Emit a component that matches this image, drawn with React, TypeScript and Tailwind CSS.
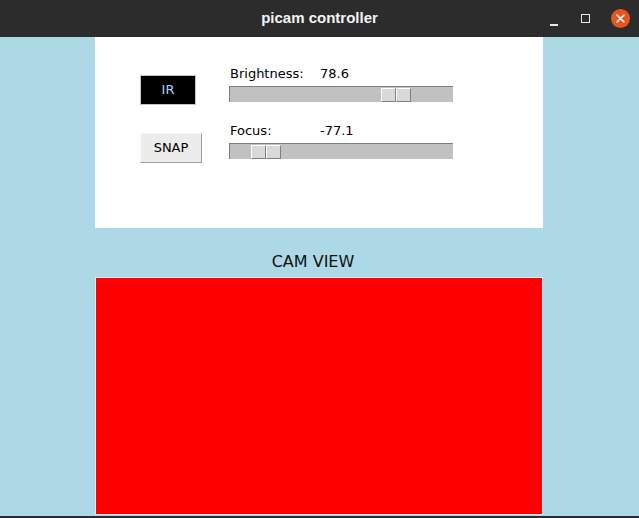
const SLIDERS = [
  { label: "Brightness:", value: "78.6", handle: "ml-[151px]" },
  { label: "Focus:", value: "-77.1", handle: "ml-[21px]" },
];

function Slider({ label, value, handle }: { label: string; value: string; handle: string }) {
  return (
    <div className="flex flex-col">
      <div className="flex h-[16px] items-center pl-[1px] text-[13px] leading-[16px] text-black">
        <span className="w-[90px]">{label}</span>
        <span>{value}</span>
      </div>
      <div className="mt-[4px] flex h-[16px] w-[224px] border-t border-l border-[#7f7f7f] bg-[#c1c1c1] pt-[1px]">
        <div className={`${handle} flex h-[14px]`}>
          <div className="h-[14px] w-[15px] border border-t-white border-l-white border-r-[#808080] border-b-[#808080] bg-[#d9d9d9]" />
          <div className="h-[14px] w-[15px] border border-t-white border-l-white border-r-[#808080] border-b-[#808080] bg-[#d9d9d9]" />
        </div>
      </div>
    </div>
  );
}

function TitleBar() {
  return (
    <div className="relative flex h-[37px] items-center justify-center bg-[#2c2c2c]">
      <span className="font-['Liberation_Sans',sans-serif] text-[15px] font-bold text-[#f2f2f2]">
        picam controller
      </span>
      <div className="absolute right-[9px] top-0 flex h-[37px] items-center">
        <div className="mt-[12px] h-[2px] w-[8px] bg-[#e8e8e8]" />
        <div className="ml-[23px] h-[9px] w-[9px] border border-[#e8e8e8]" />
        <div className="ml-[21px] flex h-[19px] w-[19px] items-center justify-center rounded-full bg-[#e95420]">
          <svg width="9" height="9" viewBox="0 0 9 9">
            <path d="M1 1 L8 8 M8 1 L1 8" stroke="#fff" strokeWidth="1.5" strokeLinecap="round" />
          </svg>
        </div>
      </div>
    </div>
  );
}

export default function App() {
  return (
    <div className="flex h-[518px] w-[639px] flex-col overflow-hidden bg-[#add8e6] font-['DejaVu_Sans',sans-serif]">
      <TitleBar />
      <div className="ml-[95px] flex w-[448px] flex-col">
        {/* control panel */}
        <div className="flex h-[191px] flex-col gap-[18px] bg-white pl-[45px] pt-[29px]">
          <div className="flex items-start">
            <div className="w-[89px] pt-[9px]">
              <button className="flex h-[30px] w-[56px] items-center justify-center border border-[#c4c4c4] bg-black text-[13px] text-[#a9d6ff]">
                IR
              </button>
            </div>
            <Slider {...SLIDERS[0]} />
          </div>
          <div className="flex items-start">
            <div className="w-[89px] pt-[10px]">
              <button className="flex h-[30px] w-[62px] items-center justify-center border border-t-[#f8f8f8] border-l-[#f8f8f8] border-r-[#9c9c9c] border-b-[#9c9c9c] bg-[#ececec] text-[13px] text-black">
                SNAP
              </button>
            </div>
            <Slider {...SLIDERS[1]} />
          </div>
        </div>

        <div className="flex h-[49px] items-end justify-center pb-[6px] pr-[12px] text-[16px] leading-[18px] text-[#111]">
          CAM VIEW
        </div>

        <div className="h-[238px] w-[448px] border border-[#e6e6e6] bg-[#ff0000]" />
      </div>
      <div className="mt-auto h-[2px] bg-[#2c2c2c]" />
    </div>
  );
}
